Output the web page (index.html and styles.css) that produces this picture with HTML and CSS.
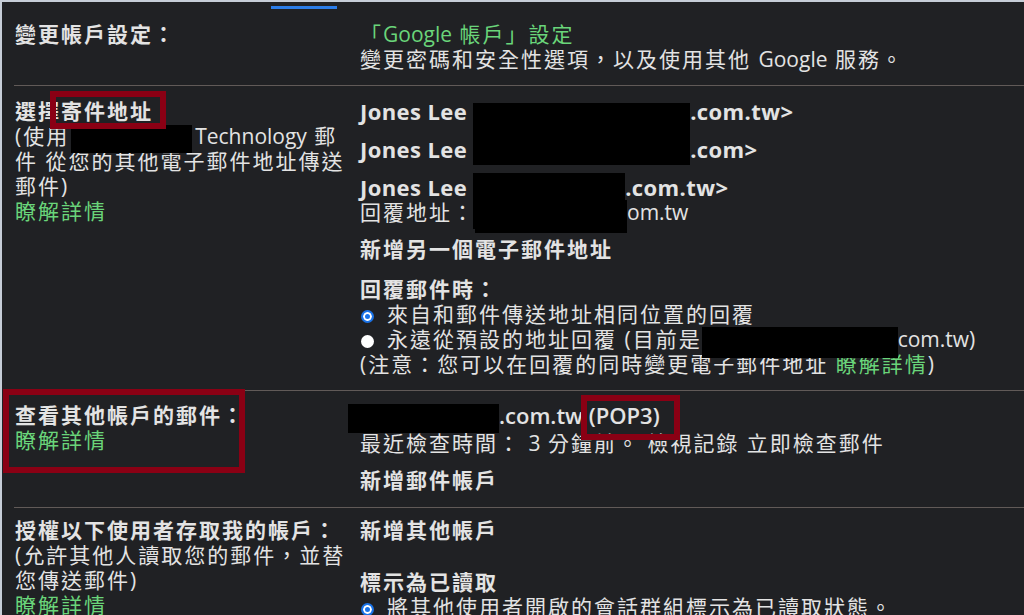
FILE: index.html
```html
<!DOCTYPE html>
<html lang="zh-TW">
<head>
    <meta charset="UTF-8">
    <meta name="viewport" content="width=device-width, initial-scale=1.0">
    <title>設定 - 帳戶和匯入</title>
    <link rel="stylesheet" href="styles.css">
</head>
<body>
    <!-- 分頁列 -->
    <div class="tabs">
        <span class="tab-active"></span>
    </div>

    <div class="settings">
        <!-- 變更帳戶設定 -->
        <div class="row row-account">
            <div class="label">
                <div class="label-title">變更帳戶設定：</div>
            </div>
            <div class="value">
                <a class="link">「<span class="en">Google</span> 帳戶」設定</a>
                <div>變更密碼和安全性選項，以及使用其他 <span class="en">Google</span> 服務。</div>
            </div>
        </div>

        <!-- 寄件地址 -->
        <div class="row row-send">
            <div class="label">
                <div class="label-title">選擇<span class="mark mark-send">寄件地址</span></div>
                <div class="label-note">(使用<span class="redact r-company"></span><span class="en">Technology</span> 郵件 從您的其他電子郵件地址傳送郵件)</div>
                <a class="link">瞭解詳情</a>
            </div>
            <div class="value">
                <div class="sender">Jones Lee <span class="redact r-mail1"></span>.com.tw&gt;</div>
                <div class="sender">Jones Lee <span class="redact r-mail2"></span>.com&gt;</div>
                <div class="sender-block">
                    <div class="sender">Jones Lee <span class="redact r-mail3"></span>.com.tw&gt;</div>
                    <div>回覆地址：<span class="redact r-reply"></span><span class="en">om.tw</span></div>
                </div>
                <a class="action add-address">新增另一個電子郵件地址</a>
                <div class="reply-opts">
                    <div class="strong">回覆郵件時：</div>
                    <label class="opt"><span class="radio on"></span>來自和郵件傳送地址相同位置的回覆</label>
                    <label class="opt"><span class="radio"></span>永遠從預設的地址回覆 (目前是<span class="redact r-default"></span><span class="en">com.tw)</span></label>
                    <div>(注意：您可以在回覆的同時變更電子郵件地址 <a class="link">瞭解詳情</a>)</div>
                </div>
            </div>
        </div>

        <!-- 查看其他帳戶的郵件 -->
        <div class="row row-pop">
            <div class="label label-marked">
                <div class="label-title">查看其他帳戶的郵件：</div>
                <a class="link">瞭解詳情</a>
            </div>
            <div class="value">
                <div class="pop-line"><span class="redact r-pop"></span><span class="en">.com.tw <span class="mark mark-pop">(POP3)</span></span></div>
                <div class="checked">最近檢查時間： <span class="en">3</span> 分鐘前。 檢視記錄 立即檢查郵件</div>
                <a class="action">新增郵件帳戶</a>
            </div>
        </div>

        <!-- 授權 -->
        <div class="row row-grant">
            <div class="label">
                <div class="label-title">授權以下使用者存取我的帳戶：</div>
                <div class="label-note">(允許其他人讀取您的郵件，並替您傳送郵件)</div>
                <a class="link">瞭解詳情</a>
            </div>
            <div class="value">
                <a class="action add-other">新增其他帳戶</a>
                <div class="strong">標示為已讀取</div>
                <label class="opt"><span class="radio on"></span>將其他使用者開啟的會話群組標示為已讀取狀態。</label>
            </div>
        </div>
    </div>
</body>
</html>
```

FILE: styles.css
```css
*,
*::before,
*::after {
    margin: 0;
    padding: 0;
    box-sizing: border-box;
}

html {
    overflow: hidden;
}

body {
    height: 615px;
    background: #202124;
    color: #e3e3e3;
    border-top: 2px solid #c6cdd7;
    border-left: 2px solid #c6cdd7;
    font-family: "Open Sans", "Noto Sans CJK TC", sans-serif;
    font-size: 21px;
    line-height: 25px;
    letter-spacing: 2px;
    overflow: hidden;
}

.en {
    letter-spacing: 0;
}

/* 分頁列 */
.tabs {
    height: 7px;
    padding: 4px 0 0 269px;
}

.tab-active {
    display: block;
    width: 66px;
    height: 3px;
    background: #2b7de9;
}

/* 設定列 */
.settings {
    margin-left: 12px;
}

.row {
    display: grid;
    grid-template-columns: 346px 1fr;
    padding: 13px 0;
}

.row + .row {
    border-top: 1px solid #615a58;
}

.row-pop {
    padding: 12px 0 14px;
}

.row-grant {
    padding-top: 10px;
}

.label {
    position: relative;
    padding: 0 12px 0 1px;
}

.label-title,
.strong,
.action {
    font-weight: 700;
}

.link {
    display: block;
    color: #6ad57a;
}

.label-note .link,
.reply-opts .link {
    display: inline;
}

.action {
    display: block;
}

/* 寄件地址 */
.sender {
    font-size: 22px;
    font-weight: 700;
    letter-spacing: 0.4px;
    margin-bottom: 13px;
}

.sender-block {
    margin-bottom: 12px;
}

.sender-block .sender {
    margin-bottom: 0;
}

.add-address {
    margin-bottom: 15px;
}

.opt {
    display: block;
}

.radio {
    display: inline-block;
    width: 13px;
    height: 13px;
    margin: 0 13px 0 1px;
    border-radius: 50%;
    background: #fff;
    vertical-align: -1px;
}

.radio.on {
    background: #1a73e8;
    border: 2px solid #1a73e8;
    box-shadow: inset 0 0 0 2px #fff;
}

/* POP3 */
.pop-line {
    font-size: 22px;
    font-weight: 600;
    margin-bottom: 3px;
}

.checked {
    margin-bottom: 12px;
}

.add-other {
    margin-bottom: 27px;
}

/* 遮蔽區塊 */
.redact {
    display: inline-block;
    position: relative;
    vertical-align: top;
    background: #000;
}

.r-company { width: 121px; height: 28px; margin: 0 3px -28px 2px; top: 1px; }
.r-mail1 { width: 217px; height: 34px; margin-bottom: -34px; top: 4px; }
.r-mail2 { width: 217px; height: 28px; margin-bottom: -28px; }
.r-mail3 { width: 152px; height: 56px; margin-bottom: -56px; top: -2px; }
.r-reply { width: 152px; height: 33px; margin-bottom: -33px; }
.r-default { width: 196px; height: 31px; margin-bottom: -31px; }
.r-pop { width: 151px; height: 29px; margin: 0 0 -29px -12px; top: 1px; }

/* 紅框標註 */
.mark {
    display: inline-block;
    position: relative;
}

.mark::after,
.label-marked::after {
    content: "";
    position: absolute;
    border: 6px solid #8a0014;
    z-index: 2;
}

.mark-send::after {
    left: -11px;
    right: -13px;
    top: -8px;
    bottom: -5px;
}

.mark-pop::after {
    left: -8px;
    right: -20px;
    top: -8px;
    bottom: -12px;
}

.label-marked::after {
    left: -11px;
    top: -14px;
    width: 242px;
    height: 84px;
}
```
